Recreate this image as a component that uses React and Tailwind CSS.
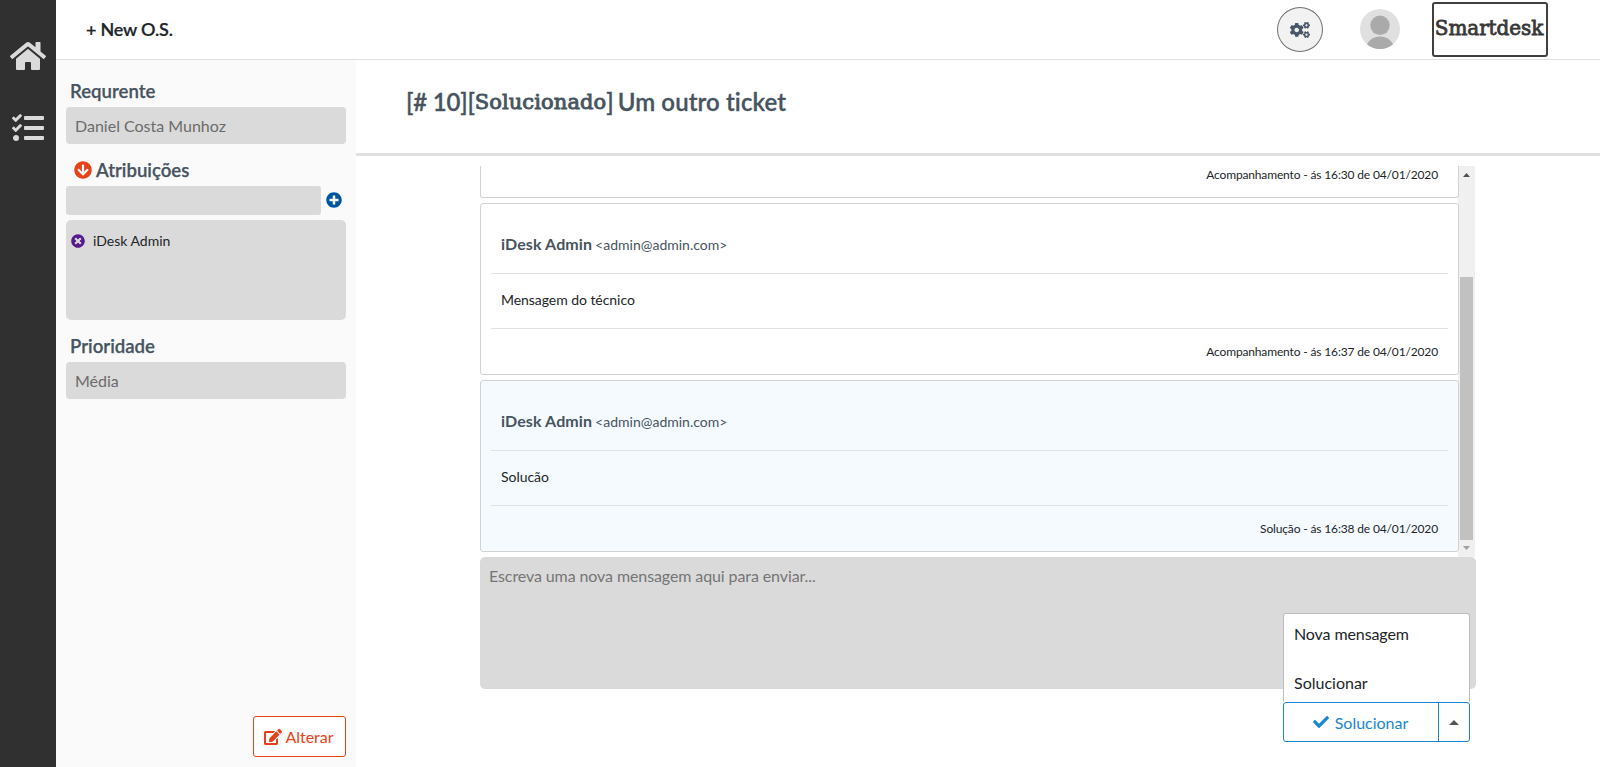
import React from "react";
import {
  FaHome, FaTasks, FaArrowCircleDown, FaPlusCircle, FaTimesCircle, FaEdit, FaCogs, FaCheck,
} from "react-icons/fa";

function SideRail() {
  return (
    <nav className="flex w-14 shrink-0 flex-col items-center bg-[#303030] pt-10 text-[32px] text-[#dadada]">
      <FaHome className="h-8 w-9" />
      <FaTasks className="mt-10 h-8 w-8" />
    </nav>
  );
}

function Avatar() {
  return (
    <svg className="h-10 w-10" viewBox="0 0 40 40">
      <defs>
        <clipPath id="avatar-circle"><circle cx="20" cy="20" r="20" /></clipPath>
      </defs>
      <g clipPath="url(#avatar-circle)">
        <rect width="40" height="40" fill="#e0e0e0" />
        <circle cx="20" cy="16.3" r="9.7" fill="#aaaaaa" />
        <ellipse cx="20" cy="40" rx="14" ry="12.500" fill="#aaaaaa" />
      </g>
    </svg>
  );
}

function Logo() {
  return (
    <div className="flex h-[55px] w-[116px] items-center justify-center rounded-[3px] border-2 border-[#404040] bg-white pr-[2px] pb-[3px] font-['DejaVu_Serif',serif] text-[20px] leading-7 tracking-[-0.1px] text-[#383838] [-webkit-text-stroke:0.8px_#383838]">
      Smartdesk
    </div>
  );
}

function Header() {
  return (
    <header className="flex h-[60px] shrink-0 items-start border-b border-[#e0e0e0] bg-white pr-[52px] pl-[30px]">
      <div className="mt-[15px] text-[18px] leading-7 font-semibold tracking-[-0.2px] text-[#212529] [-webkit-text-stroke:0.2px_#212529]">+ New O.S.</div>
      <button className="mt-[7px] ml-auto flex h-[45px] w-[46px] items-center justify-center rounded-[50%] border border-[#707070] bg-[#f2f2f2]">
        <FaCogs className="h-4 w-5 text-[#475668]" />
      </button>
      <div className="mt-[9px] ml-[37px]"><Avatar /></div>
      <div className="mt-[2px] ml-8"><Logo /></div>
    </header>
  );
}

function Details() {
  return (
    <aside className="flex w-[300px] shrink-0 flex-col bg-[#fafafa] px-[10px] pb-[10px] text-[#475460]">
      <h5 className="mt-[17px] ml-1 h-[30px] text-[18.6px] leading-7 font-semibold [-webkit-text-stroke:0.25px_#475460]">Requrente</h5>
      <div className="h-[37px] rounded-[4px] bg-[#dadada] pl-[9px] text-base leading-[38px] text-[#6b6b6b]">Daniel Costa Munhoz</div>
      <h5 className="mt-[11px] mb-[2px] ml-2 flex h-[29px] items-center gap-1 text-[18.6px] leading-7 font-semibold [-webkit-text-stroke:0.25px_#475460]">
        <FaArrowCircleDown className="h-[18px] w-[18px] text-[#e64219]" />
        Atribuições
      </h5>
      <div className="flex items-start gap-[5px]">
        <div className="h-[29px] w-[255px] rounded-[3px] bg-[#dadada]" />
        <FaPlusCircle className="mt-[6px] h-4 w-4 text-[#0055a0]" />
      </div>
      <div className="mt-[5px] h-[100px] rounded-[5px] bg-[#dadada] px-[5px] pt-[11px]">
        <div className="flex items-center gap-2 text-sm leading-5 text-[#212529]">
          <FaTimesCircle className="h-[14px] w-[14px] text-[#551a8b]" />
          iDesk Admin
        </div>
      </div>
      <h5 className="mt-[12px] ml-1 h-[30px] text-[18.6px] leading-7 font-semibold [-webkit-text-stroke:0.25px_#475460]">Prioridade</h5>
      <div className="h-[37px] rounded-[4px] bg-[#dadada] pl-[9px] text-base leading-[38px] text-[#6b6b6b]">Média</div>
      <button className="mt-auto flex h-[41px] w-[93px] items-center justify-center gap-[3px] self-end rounded-[3px] border border-[#e64219] bg-white pr-px text-base text-[#e64219]">
        <FaEdit className="h-4 w-[18px]" />
        Alterar
      </button>
    </aside>
  );
}

function MessageFooter({ children }) {
  return (
    <div className="px-[10px] text-right text-xs leading-[18px] tracking-[-0.15px] text-[#212529]">{children}</div>
  );
}

function Message({ body, footer, solved }) {
  return (
    <article className={`flex h-[172px] w-[979px] shrink-0 flex-col rounded-[3px] border border-[#d2d2d2] px-[10px] ${solved ? "bg-[#f5faff]" : "bg-white"}`}>
      <div className="h-[70px] border-b border-[#e0e3e6] px-[10px] pt-[28px] leading-6 text-[#475460]">
        <span className="text-base font-bold tracking-[0.1px]">iDesk Admin</span>
        <span className="ml-[3px] text-sm">&lt;admin@admin.com&gt;</span>
      </div>
      <div className="mb-[14px] h-[55px] border-b border-[#e0e3e6] px-[10px] pt-[15px] text-sm leading-[21px] tracking-[-0.05px] text-[#212529]">{body}</div>
      <MessageFooter>{footer}</MessageFooter>
    </article>
  );
}

function Scrollbar() {
  return (
    <div className="-ml-px flex w-[17px] flex-col items-center bg-[#f0f0f0]">
      <svg className="h-[17px] w-[17px] shrink-0" viewBox="0 0 17 17"><path d="M5 11h7L8.5 7z" fill="#505050" /></svg>
      <div className="mt-[94px] h-[263px] w-[13px] bg-[#c1c1c1]" />
      <svg className="h-[17px] w-[17px] shrink-0" viewBox="0 0 17 17"><path d="M5 6h7l-3.500 4z" fill="#a0a0a0" /></svg>
    </div>
  );
}

function Conversation() {
  return (
    <div className="ml-[124px] w-[996px] pt-[10px]">
      <div className="flex h-[391px]">
        <div className="z-10 flex w-[979px] shrink-0 flex-col gap-[5px]">
          <article className="h-8 rounded-b-[3px] border border-t-0 border-[#d2d2d2] bg-white px-[10px]">
            <MessageFooter>Acompanhamento - ás 16:30 de 04/01/2020</MessageFooter>
          </article>
          <Message body="Mensagem do técnico" footer="Acompanhamento - ás 16:37 de 04/01/2020" />
          <Message body="Solucão" footer="Solução - ás 16:38 de 04/01/2020" solved />
        </div>
        <Scrollbar />
      </div>
      <div className="relative h-[132px] rounded-[5px] bg-[#dadada] pt-[7px] pl-[9px] text-base leading-6 tracking-[-0.1px] text-[#757575]">
        Escreva uma nova mensagem aqui para enviar...
        <div className="absolute top-[56px] right-[6px] w-[187px] text-[#212529]">
          <div className="flex h-[89px] flex-col rounded-t-[3px] border border-b-0 border-[#bdbdbd] bg-white px-[10px] pt-2">
            <div className="h-[49px]">Nova mensagem</div>
            <div className="tracking-normal">Solucionar</div>
          </div>
          <div className="flex h-10 rounded-[3px] border border-[#1a86d0] bg-white tracking-normal text-[#1a86d0]">
            <button className="flex flex-1 items-center justify-center gap-[6px] pr-px">
              <FaCheck className="h-4 w-4" />
              <span className="pt-[2px]">Solucionar</span>
            </button>
            <button className="flex w-[31px] items-center justify-center border-l border-[#1a86d0]">
              <svg className="h-[5px] w-[10px]" viewBox="0 0 10 5"><path d="M0 5h10L5 0z" fill="#555" /></svg>
            </button>
          </div>
        </div>
      </div>
    </div>
  );
}

export default function App() {
  return (
    <div className="flex h-[767px] w-[1600px] overflow-hidden bg-white font-[Lato,sans-serif] [font-variant-ligatures:none]">
      <SideRail />
      <div className="flex flex-1 flex-col">
        <Header />
        <div className="flex flex-1">
          <Details />
          <main className="flex-1 bg-white">
            <div className="flex h-[96px] border-b-[3px] border-[#e0e0e0] pt-[24px] pl-[50px] text-2xl leading-9 font-semibold whitespace-nowrap text-[#475460] [-webkit-text-stroke:0.3px_#475460]">
              <span className="tracking-[-0.2px]">[# 10][</span>
              <span className="font-['DejaVu_Serif',serif] text-[21px] font-normal tracking-[0.1px] [-webkit-text-stroke:0.9px_#475460]">Solucionado</span>
              <span>]</span>
              <span className="ml-[4px] tracking-[0.1px]">Um outro ticket</span>
            </div>
            <Conversation />
          </main>
        </div>
      </div>
    </div>
  );
}
